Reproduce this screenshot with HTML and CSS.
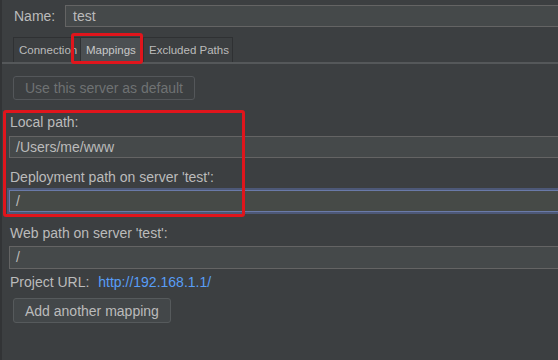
FILE: index.html
```html
<!DOCTYPE html>
<html lang="en">
<head>
    <meta charset="UTF-8">
    <title>Deployment - test</title>
    <link rel="stylesheet" href="styles.css">
</head>
<body>
    <div class="page">
        <div class="name-row">
            <label>Name:</label>
            <div class="input">test</div>
        </div>

        <ul class="tabs">
            <li class="first">Connection</li>
            <li class="active">Mappings</li>
            <li>Excluded Paths</li>
        </ul>

        <div class="panel">
            <button class="btn" disabled>Use this server as default</button>

            <div class="field-label first">Local path:</div>
            <div class="input">/Users/me/www</div>

            <div class="field-label">Deployment path on server 'test':</div>
            <div class="input focused">/</div>

            <div class="field-label after-focus">Web path on server 'test':</div>
            <div class="input tall">/</div>

            <div class="url-row">
                <span>Project URL:</span>
                <a href="#">http://192.168.1.1/</a>
            </div>

            <button class="btn add">Add another mapping</button>
        </div>
    </div>

    <!-- annotation boxes -->
    <div class="mark mark-tab"></div>
    <div class="mark mark-paths"></div>
</body>
</html>
```

FILE: styles.css
```css
body {
    margin: 0;
    background-color: #3c3f41;
    color: #bbbbbb;
    font-family: 'Liberation Sans', Arial, sans-serif;
    font-size: 14px;
    position: relative;
    height: 360px;
    overflow: hidden;
}

.page {
    border-left: 2px solid #323436;
    height: 360px;
}

/* Inputs */
.input {
    height: 22px;
    line-height: 20px;
    box-sizing: border-box;
    background: #45494a;
    border: 1px solid #646464;
    border-right: none;
    padding-left: 6px;
    color: #bbbbbb;
    white-space: nowrap;
}

.input.tall {
    height: 23px;
}

.input.focused {
    background: #464a47;
    border-color: #6a7aa8;
    box-shadow: 0 0 0 2px #4d5877;
    margin-top: 5px;
}

/* Name */
.name-row {
    display: flex;
    align-items: center;
    padding: 5px 0 0 12px;
}

.name-row label {
    width: 51px;
}

.name-row .input {
    flex: 1;
    padding-left: 7px;
}

/* Tabs */
.tabs {
    list-style: none;
    margin: 10px 0 0;
    padding: 0 0 0 11px;
    display: flex;
    height: 25px;
    font-size: 11.5px;
    border-bottom: 2px solid #55585a;
}

.tabs li {
    padding: 0 5px;
    line-height: 25px;
    border: 1px solid #2f3133;
    border-bottom: none;
    border-right: none;
    white-space: nowrap;
    overflow: hidden;
}

.tabs li.first {
    width: 56px;
}

.tabs li.active {
    width: 52px;
    background: #4b4f52;
    color: #c8c8c8;
}

.tabs li:last-child {
    width: 78px;
    border-right: 1px solid #2f3133;
}

/* Panel */
.panel {
    padding: 12px 0 0 7px;
}

.btn {
    display: block;
    margin-left: 4px;
    height: 24px;
    padding: 0 11px;
    background: #3c3f41;
    border: 1px solid #5e6060;
    border-radius: 3px;
    color: #bbbbbb;
    font-family: inherit;
    font-size: 14px;
}

.btn:disabled {
    color: #6f7273;
    border-color: #54575a;
}

.field-label {
    line-height: 16px;
    margin: 11px 0 3px 1px;
}

.field-label.first {
    margin-top: 14px;
    margin-bottom: 6px;
}

.field-label.after-focus {
    margin-top: 13px;
    margin-bottom: 5px;
}

.url-row {
    line-height: 16px;
    margin: 5px 0 0 1px;
}

.url-row a {
    color: #589df6;
    text-decoration: none;
    margin-left: 5px;
}

.btn.add {
    margin-top: 8px;
    height: 25px;
    background: #434749;
    border-color: #565a5c;
}

/* Red annotation boxes */
.mark {
    position: absolute;
    border: 3px solid #e0151c;
    border-radius: 3px;
}

.mark-tab {
    left: 71px;
    top: 33px;
    width: 66px;
    height: 25px;
}

.mark-paths {
    left: 3px;
    top: 110px;
    width: 236px;
    height: 101px;
}
```
